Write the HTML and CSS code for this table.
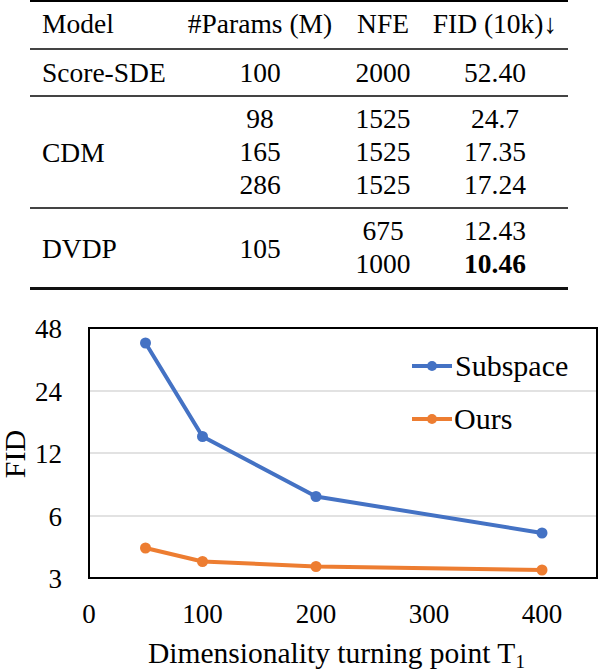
FILE: index.html
```html
<!DOCTYPE html>
<html>
<head>
<meta charset="utf-8">
<link rel="stylesheet" href="styles.css">
</head>
<body>
<div class="table">
  <div class="sec head">
    <div class="c model">Model</div>
    <div class="c">#Params (M)</div>
    <div class="c">NFE</div>
    <div class="c">FID (10k)↓</div>
  </div>
  <div class="sec single">
    <div class="c model">Score-SDE</div>
    <div class="c">100</div>
    <div class="c">2000</div>
    <div class="c">52.40</div>
  </div>
  <div class="sec multi cdm">
    <div class="c model mid">CDM</div>
    <div class="c"><div>98</div><div>165</div><div>286</div></div>
    <div class="c"><div>1525</div><div>1525</div><div>1525</div></div>
    <div class="c"><div>24.7</div><div>17.35</div><div>17.24</div></div>
  </div>
  <div class="sec multi dvdp last">
    <div class="c model mid">DVDP</div>
    <div class="c mid">105</div>
    <div class="c"><div>675</div><div>1000</div></div>
    <div class="c"><div>12.43</div><div><b>10.46</b></div></div>
  </div>
</div>
<svg class="chart" viewBox="0 291 600 381" width="600" height="381">
  <g class="grid">
    <line x1="89" x2="597" y1="392" y2="392"/>
    <line x1="89" x2="597" y1="454" y2="454"/>
    <line x1="89" x2="597" y1="517" y2="517"/>
  </g>
  <rect class="frame" x="89" y="329" width="508" height="250"/>
  <polyline class="s-blue" points="145.5,344 202.5,437.5 316,497.5 542,534"/>
  <g class="d-blue">
    <circle cx="145.5" cy="344" r="5.5"/>
    <circle cx="202.5" cy="437.5" r="5.5"/>
    <circle cx="316" cy="497.5" r="5.5"/>
    <circle cx="542" cy="534" r="5.5"/>
  </g>
  <polyline class="s-orange" points="145.5,549 202.5,562.5 316,567.5 542,571"/>
  <g class="d-orange">
    <circle cx="145.5" cy="549" r="5.5"/>
    <circle cx="202.5" cy="562.5" r="5.5"/>
    <circle cx="316" cy="567.5" r="5.5"/>
    <circle cx="542" cy="571" r="5.5"/>
  </g>
  <g class="ytick">
    <text x="62" y="339">48</text>
    <text x="62" y="402">24</text>
    <text x="62" y="464">12</text>
    <text x="62" y="527">6</text>
    <text x="62" y="589">3</text>
  </g>
  <g class="xtick">
    <text x="89" y="624">0</text>
    <text x="202.5" y="624">100</text>
    <text x="316" y="624">200</text>
    <text x="429" y="624">300</text>
    <text x="542" y="624">400</text>
  </g>
  <text class="ylabel" transform="translate(25 455) rotate(-90)">FID</text>
  <text class="xlabel" x="148" y="664">Dimensionality turning point T<tspan class="sub" dy="5">1</tspan></text>
  <g class="legend">
    <line class="s-blue" x1="412" x2="452" y1="367" y2="367"/>
    <circle class="d-blue" cx="432" cy="367" r="5"/>
    <text x="455" y="377">Subspace</text>
    <line class="s-orange" x1="412" x2="452" y1="420" y2="420"/>
    <circle class="d-orange" cx="432" cy="420" r="5"/>
    <text x="454" y="430">Ours</text>
  </g>
</svg>
</body>
</html>
```

FILE: styles.css
```css
html, body {
  margin: 0;
  padding: 0;
  background: #fff;
}
body {
  width: 600px;
  height: 672px;
  overflow: hidden;
  font-family: "Liberation Serif", "Times New Roman", serif;
  color: #000;
}
.table {
  margin-left: 30px;
  width: 538px;
  border-top: 2px solid #000;
  border-bottom: 3px solid #111;
  font-size: 27.5px;
  line-height: 33px;
}
.sec {
  display: grid;
  grid-template-columns: 156px 148px 98px 126px;
  border-bottom: 2px solid #444;
}
.sec.last {
  border-bottom: none;
}
.c {
  text-align: center;
  white-space: nowrap;
}
.head .c {
  padding-top: 5px;
  padding-bottom: 8px;
}
.single .c {
  padding-top: 6px;
  padding-bottom: 6px;
}
.cdm .c {
  padding-top: 5px;
  padding-bottom: 6px;
}
.dvdp .c {
  padding-top: 5px;
  padding-bottom: 7px;
}
.multi .c.mid {
  align-self: center;
  padding-top: 0;
  padding-bottom: 0;
}
.sec .c.model {
  text-align: left;
  padding-left: 12px;
}
.chart {
  display: block;
}
.chart text {
  font-family: "Liberation Serif", "Times New Roman", serif;
  fill: #000;
}
.grid line {
  stroke: #d9d9d9;
  stroke-width: 1.5;
}
.frame {
  fill: none;
  stroke: #000;
  stroke-width: 2;
}
.s-blue {
  fill: none;
  stroke: #4472c4;
  stroke-width: 4;
  stroke-linejoin: round;
}
.s-orange {
  fill: none;
  stroke: #ed7d31;
  stroke-width: 4;
  stroke-linejoin: round;
}
.d-blue, .d-blue circle {
  fill: #4472c4;
}
.d-orange, .d-orange circle {
  fill: #ed7d31;
}
.ytick text {
  font-size: 27px;
  text-anchor: end;
}
.xtick text {
  font-size: 27px;
  text-anchor: middle;
}
.ylabel {
  font-size: 30px;
  text-anchor: middle;
}
.xlabel {
  font-size: 29.5px;
}
.xlabel .sub {
  font-size: 19px;
}
.legend text {
  font-size: 30px;
}
```
